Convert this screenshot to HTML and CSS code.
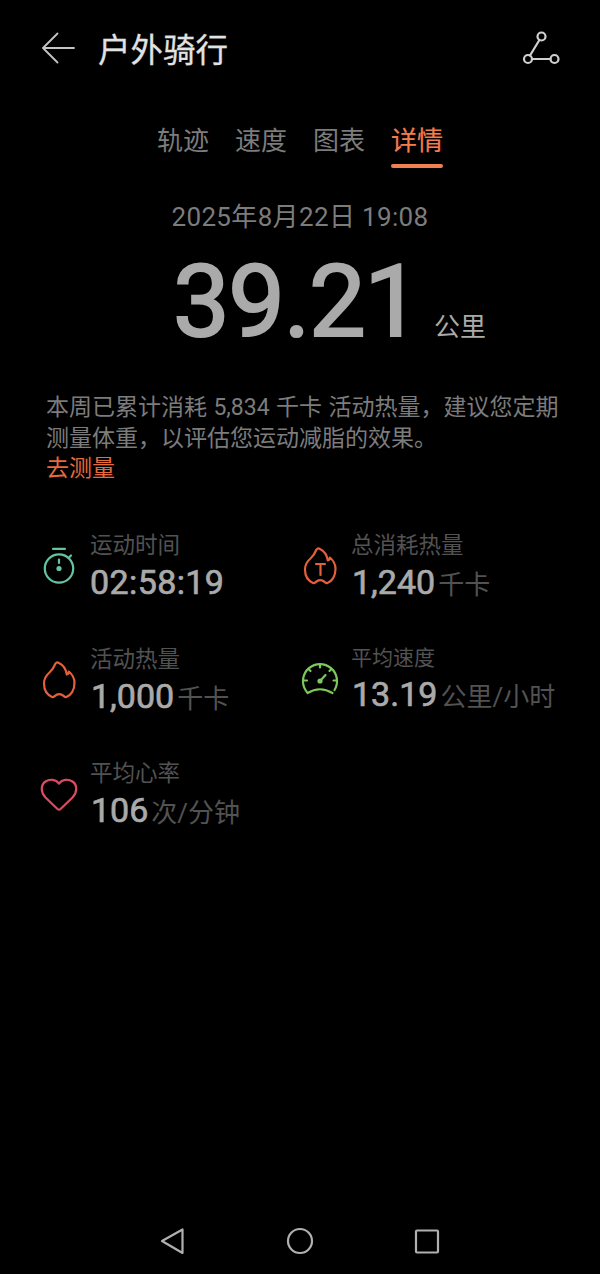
FILE: index.html
```html
<!DOCTYPE html>
<html lang="zh-CN">
<head>
  <meta charset="UTF-8">
  <meta name="viewport" content="width=device-width, initial-scale=1.0">
  <title>户外骑行</title>
  <link rel="stylesheet" href="styles.css">
</head>
<body>
  <header class="header">
    <svg class="back" width="34" height="32" viewBox="0 0 34 32">
      <path d="M32 16H1.500M15.500 1.500L1 16L15.500 30.500"/>
    </svg>
    <h1>户外骑行</h1>
    <svg class="route" width="38" height="34" viewBox="0 0 38 34">
      <circle cx="19.500" cy="5.500" r="4"/>
      <circle cx="6" cy="28" r="4"/>
      <circle cx="32.500" cy="28" r="4"/>
      <path d="M17.400 9L8 24.500M10 28H28.500"/>
    </svg>
  </header>

  <nav class="tabs">
    <a class="tab">轨迹</a>
    <a class="tab">速度</a>
    <a class="tab">图表</a>
    <a class="tab active">详情</a>
  </nav>

  <main>
    <div class="date">2025年8月22日 19:08</div>
    <div class="distance">
      <span class="number">39.21</span>
      <span class="km">公里</span>
    </div>

    <div class="tip">
      <p>本周已累计消耗 5,834 千卡 活动热量，建议您定期<br>测量体重，以评估您运动减脂的效果。</p>
      <a class="link">去测量</a>
    </div>

    <div class="stats">
      <div class="stat">
        <svg class="icon time" viewBox="0 0 38 38">
          <circle cx="19" cy="21.500" r="14.200"/>
          <path d="M13 1.800H25M28.500 11L31 8.500M19 12.500V16"/>
          <circle class="dot" cx="19" cy="21.500" r="2.600"/>
        </svg>
        <div class="info">
          <div class="label">运动时间</div>
          <div class="value clock">02:58:19</div>
        </div>
      </div>
      <div class="stat">
        <svg class="icon fire" viewBox="0 0 38 38">
          <path d="M12.500 36.200C7 34 4 29 4 22.500C4 17 6.500 14 9.500 11.500C13 8.500 14.500 5 15.500 2.500Q16.800 .6 19 2C23 4 26 8 26.800 13.500Q28.800 13 28.800 10.500C32.500 13.500 34.500 17.500 34.500 22C34.500 29 31 34.500 26 36.200C24 36.500 23.500 33.200 19.200 33.200C15 33.200 14.500 36.500 12.500 36.200Z"/>
          <path d="M15 17H24M19.500 17V28"/>
        </svg>
        <div class="info">
          <div class="label">总消耗热量</div>
          <div class="value">1,240<span class="unit">千卡</span></div>
        </div>
      </div>
      <div class="stat">
        <svg class="icon fire" viewBox="0 0 38 38">
          <path d="M12.500 36.200C7 34 4 29 4 22.500C4 17 6.500 14 9.500 11.500C13 8.500 14.500 5 15.500 2.500Q16.800 .6 19 2C23 4 26 8 26.800 13.500Q28.800 13 28.800 10.500C32.500 13.500 34.500 17.500 34.500 22C34.500 29 31 34.500 26 36.200C24 36.500 23.500 33.200 19.200 33.200C15 33.200 14.500 36.500 12.500 36.200Z"/>
        </svg>
        <div class="info">
          <div class="label">活动热量</div>
          <div class="value">1,000<span class="unit">千卡</span></div>
        </div>
      </div>
      <div class="stat">
        <svg class="icon speed" viewBox="0 0 38 38">
          <path d="M33.500 29A17 17 0 1 0 4.500 29L6.500 32Q19 24.500 31.500 32"/>
          <path d="M19 3V6.500M7.500 8L9.500 10M30.500 8L28.500 10M2.500 19.500H6M35.500 19.500H32.500M19 20L24.500 14"/>
          <circle class="dot" cx="19" cy="20" r="2.600"/>
        </svg>
        <div class="info compact">
          <div class="label">平均速度</div>
          <div class="value">13.19<span class="unit">公里/小时</span></div>
        </div>
      </div>
      <div class="stat">
        <svg class="icon heart" viewBox="0 0 38 38">
          <path d="M17.500 34L5.500 22.500C.5 17 .5 10 5.500 6.500C10 3.500 16 4.500 19 8.500C22 4.500 28 3.500 32.500 6.500C37.500 10 37.500 17 32.500 22.500L20.500 34Q19 35.300 17.500 34Z"/>
        </svg>
        <div class="info">
          <div class="label">平均心率</div>
          <div class="value">106<span class="unit">次/分钟</span></div>
        </div>
      </div>
    </div>
  </main>

  <footer class="navbar">
    <svg width="26" height="28" viewBox="0 0 26 28"><path d="M2 14L22.500 2.500V26Z"/></svg>
    <svg width="28" height="28" viewBox="0 0 28 28"><circle cx="14" cy="14" r="12"/></svg>
    <svg width="26" height="28" viewBox="0 0 26 28"><rect x="2" y="3.500" width="22" height="22" rx="1"/></svg>
  </footer>
</body>
</html>
```

FILE: styles.css
```css
* {
  box-sizing: border-box;
}

body {
  margin: 0;
  height: 1274px;
  display: flex;
  flex-direction: column;
  background-color: #000;
  color: #aaa;
  font-family: Roboto, "Noto Sans CJK SC", sans-serif;
}

svg {
  flex: none;
  fill: none;
  stroke-width: 2.2;
  stroke-linecap: round;
  stroke-linejoin: round;
}

.header {
  display: flex;
  align-items: center;
  height: 96px;
  padding: 0 40px 0 42px;
}

.header h1 {
  flex: 1;
  margin: 0 0 0 22px;
  padding-top: 5px;
  font-size: 32.5px;
  font-weight: 400;
  line-height: 48px;
  color: #e2e2e2;
  -webkit-text-stroke: 0.3px #e2e2e2;
}

.back {
  stroke: #c4c4c4;
  stroke-width: 1.8;
}

.route {
  stroke: #d0d0d0;
}

.tabs {
  display: flex;
  justify-content: center;
  gap: 26px;
  height: 72px;
  padding-top: 24px;
}

.tab {
  height: 48px;
  font-size: 26px;
  line-height: 43px;
  color: #7c7c7c;
}

.tab.active {
  color: #f47c4c;
  -webkit-text-stroke: 0.2px #f47c4c;
}

.tab.active::after {
  content: "";
  display: block;
  height: 4px;
  margin-top: 1px;
  border-radius: 2px;
  background-color: #f08050;
}

.date {
  height: 40px;
  margin-top: 29px;
  text-align: center;
  font-size: 26px;
  line-height: 40px;
  letter-spacing: 0.35px;
  color: #7c7c7c;
}

.distance {
  display: flex;
  align-items: baseline;
  gap: 16px;
  height: 120px;
  margin-top: 6px;
  padding-left: 173px;
  line-height: 118px;
}

.number {
  width: 245px;
  font-size: 101px;
  letter-spacing: -1.4px;
  -webkit-text-stroke: 2.2px #aaa;
}

.km {
  font-size: 26px;
}

.tip {
  margin-top: 30px;
  padding-left: 46px;
  font-size: 23px;
  line-height: 30.5px;
  color: #7c7c7c;
  white-space: nowrap;
}

.tip p {
  margin: 0;
  word-spacing: 0.7px;
}

.link {
  color: #e66a3c;
}

.stats {
  display: grid;
  grid-template-columns: 261px 261px;
  grid-auto-rows: 114px;
  margin-top: 43px;
  padding-left: 40px;
}

.stat {
  display: flex;
  gap: 12px;
}

.icon {
  width: 38px;
  height: 38px;
  margin-top: 19px;
}

.label {
  font-size: 22.5px;
  line-height: 34px;
  color: #525252;
}

.value {
  padding-left: 1px;
  font-size: 34px;
  line-height: 41px;
  white-space: nowrap;
  -webkit-text-stroke: 0.7px #aaa;
}

.clock {
  padding-left: 0;
  letter-spacing: 0.4px;
}

.unit {
  margin-left: 3px;
  font-size: 26px;
  color: #525252;
  -webkit-text-stroke: 0;
}

.compact .label {
  font-size: 21px;
  line-height: 32px;
}

.compact .value {
  line-height: 41px;
}

.time {
  stroke: #63c49f;
}

.time .dot {
  fill: #63c49f;
  stroke: none;
}

.fire {
  stroke: #e4603c;
}

.speed {
  stroke: #7cc85c;
}

.speed .dot {
  fill: #7cc85c;
  stroke: none;
}

.heart {
  stroke: #dc4c60;
}

.navbar {
  display: flex;
  justify-content: space-between;
  margin-top: auto;
  padding: 0 160px 19px;
}

.navbar svg {
  stroke: #b0b0b0;
}
```
